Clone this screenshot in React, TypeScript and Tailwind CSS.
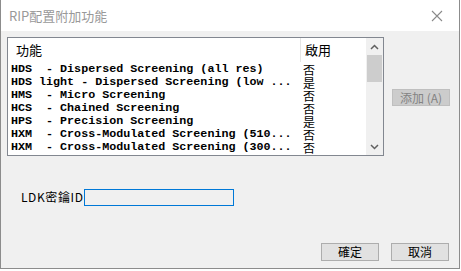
const rows: [string, string][] = [
  ["HDS  - Dispersed Screening (all res)", "否"],
  ["HDS light - Dispersed Screening (low ...", "是"],
  ["HMS  - Micro Screening", "否"],
  ["HCS  - Chained Screening", "否"],
  ["HPS  - Precision Screening", "是"],
  ["HXM  - Cross-Modulated Screening (510...", "否"],
  ["HXM  - Cross-Modulated Screening (300...", "否"],
];

const cjk = { fontFamily: '"Noto Sans CJK TC", "Noto Sans CJK SC", sans-serif' };

export default function App() {
  return (
    <div className="relative h-[271px] w-[461px] overflow-hidden bg-white">
      <div className="flex h-[269px] w-[460px] flex-col border-x border-b border-[#8c8c8c] bg-[#f0f0f0]">
        {/* Title bar */}
        <div className="flex h-[31px] shrink-0 items-center justify-between bg-white pl-[8px] pr-[14px]">
          <span className="text-[13px] text-[#999999]" style={cjk}>RIP配置附加功能</span>
          <svg width="12" height="12" viewBox="0 0 12 12" className="mr-[2px]">
            <path d="M1 1 L11 11 M11 1 L1 11" stroke="#8a8a8a" strokeWidth="1.1" />
          </svg>
        </div>

        <div className="flex pl-[6px] pt-[6px]">
          {/* List box */}
          <div className="flex h-[119px] w-[377px] border border-[#828790] bg-white">
            <div className="flex flex-1 flex-col">
              <div className="flex h-[24px] items-center text-[13px] text-black" style={cjk}>
                <span className="w-[293px] border-r border-[#e5e5e5] pl-[8px] leading-[24px]">功能</span>
                <span className="pl-[4px]">啟用</span>
              </div>
              <div className="flex flex-col pt-[1px]">
                {rows.map(([name, on]) => (
                  <div key={name} className="flex h-[13px] items-center leading-[13px]">
                    <span
                      className="w-[295px] whitespace-pre pl-[3px] text-[11.7px] font-bold text-black"
                      style={{ fontFamily: '"Liberation Mono", monospace' }}
                    >
                      {name}
                    </span>
                    <span className="text-[12px] leading-[13px] text-black" style={cjk}>{on}</span>
                  </div>
                ))}
              </div>
            </div>
            {/* Scrollbar */}
            <div className="flex w-[17px] flex-col bg-[#f0f0f0]">
              <div className="flex h-[17px] items-center justify-center">
                <svg width="9" height="6" viewBox="0 0 9 6">
                  <path d="M1 5 L4.5 1.5 L8 5" stroke="#606060" strokeWidth="1.5" fill="none" />
                </svg>
              </div>
              <div className="mx-[1px] h-[27px] bg-[#cdcdcd]" />
              <div className="flex-1" />
              <div className="flex h-[17px] items-center justify-center">
                <svg width="9" height="6" viewBox="0 0 9 6">
                  <path d="M1 1 L4.5 4.5 L8 1" stroke="#606060" strokeWidth="1.5" fill="none" />
                </svg>
              </div>
            </div>
          </div>

          <div className="ml-[8px] pt-[52px]">
            <div
              className="flex h-[17px] w-[58px] items-center justify-center border border-[#bfbfbf] bg-[#cccccc] text-[12px] text-[#838383]"
              style={cjk}
            >
              添加 (A)
            </div>
          </div>
        </div>

        {/* LDK ID */}
        <div className="mt-[32px] flex items-center pl-[20px]">
          <span className="text-[12px] tracking-[0.6px] text-black" style={cjk}>LDK密鑰ID</span>
          <div className="h-[17px] w-[150px] border border-[#0078d7] bg-[#f0f0f0]" />
        </div>

        <div className="flex-1" />

        {/* Buttons */}
        <div className="mb-[7px] flex justify-end gap-[12px] pr-[10px]">
          <div
            className="flex h-[18px] w-[58px] items-center justify-center border border-[#adadad] bg-[#e1e1e1] text-[12px] text-black"
            style={cjk}
          >
            確定
          </div>
          <div
            className="flex h-[18px] w-[58px] items-center justify-center border border-[#adadad] bg-[#e1e1e1] text-[12px] text-black"
            style={cjk}
          >
            取消
          </div>
        </div>
      </div>
    </div>
  );
}
